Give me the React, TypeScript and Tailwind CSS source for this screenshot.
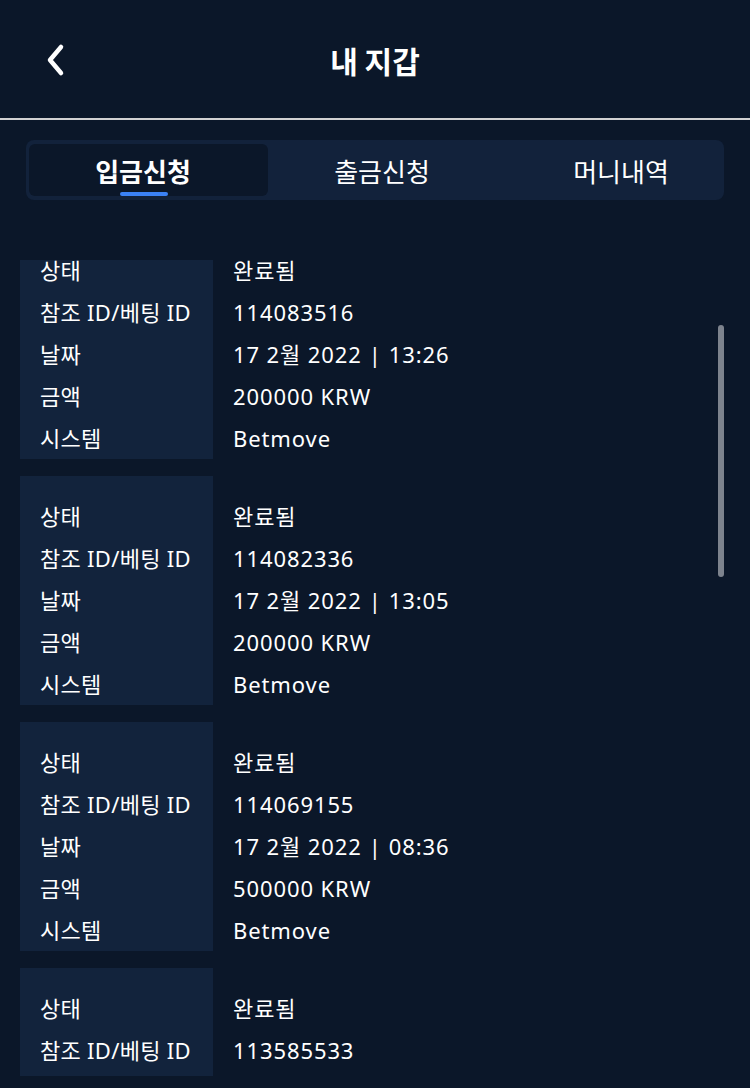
import React from "react";

interface Record {
  status: string;
  refId: string;
  date: string;
  time: string;
  amount: string;
  system: string;
}

const records: Record[] = [
  { status: "완료됨", refId: "114083516", date: "17 2월 2022", time: "13:26", amount: "200000 KRW", system: "Betmove" },
  { status: "완료됨", refId: "114082336", date: "17 2월 2022", time: "13:05", amount: "200000 KRW", system: "Betmove" },
  { status: "완료됨", refId: "114069155", date: "17 2월 2022", time: "08:36", amount: "500000 KRW", system: "Betmove" },
  { status: "완료됨", refId: "113585533", date: "17 2월 2022", time: "08:12", amount: "300000 KRW", system: "Betmove" },
];

const labels = ["상태", "참조 ID/베팅 ID", "날짜", "금액", "시스템"];

const tabs = ["입금신청", "출금신청", "머니내역"];

const RecordCard = ({ record }: { record: Record }) => {
  return (
    <div className="flex">
      <div className="w-[193px] bg-[#12233c] pt-[19px] tracking-[0.3px]">
        {labels.map((l) => (
          <div key={l} className="h-[42px] flex items-center pl-[20px] whitespace-nowrap">
            {l}
          </div>
        ))}
      </div>
      <div className="pt-[19px] pl-[20px] tracking-[0.9px]">
        <div className="h-[42px] flex items-center">{record.status}</div>
        <div className="h-[42px] flex items-center">{record.refId}</div>
        <div className="h-[42px] flex items-center whitespace-nowrap">
          {record.date}
          <span className="mx-[7px]">|</span>
          {record.time}
        </div>
        <div className="h-[42px] flex items-center">{record.amount}</div>
        <div className="h-[42px] flex items-center">{record.system}</div>
      </div>
    </div>
  );
};

export default function App() {
  return (
    <div
      className="w-[750px] h-[1088px] bg-[#0b1729] text-white overflow-hidden relative"
      style={{ fontFamily: '"Noto Sans", "Noto Sans CJK KR", sans-serif' }}
    >
      {/* Header */}
      <header className="h-[118px] flex items-center relative">
        <button className="absolute left-[40px] top-[38px] p-1">
          <svg width="24" height="36" viewBox="0 0 24 36" fill="none">
            <path d="M17 5 L6 18 L17 31" stroke="white" strokeWidth="4.5" strokeLinecap="round" strokeLinejoin="round" />
          </svg>
        </button>
        <h1 className="w-full text-center text-[30px] font-bold pt-[2px]" style={{ fontFamily: '"Noto Sans CJK KR", sans-serif' }}>
          내 지갑
        </h1>
      </header>
      <div className="h-[2px] bg-[#d2d2d2]" />

      {/* Tabs */}
      <div className="mx-[26px] mt-[20px] h-[60px] rounded-lg bg-[#12223b] flex items-center pl-[3px] overflow-hidden">
        {tabs.map((t, i) => (
          <div
            key={t}
            className={
              i === 0
                ? "shrink-0 w-[239px] h-[52px] rounded-md bg-[#0b1729] flex items-center justify-center pr-[11px] text-[26px] font-bold relative"
                : "shrink-0 w-[239px] h-[52px] flex items-center justify-center pr-[11px] text-[26px]"
            }
            style={{ fontFamily: '"Noto Sans CJK KR", sans-serif' }}
          >
            {t}
            {i === 0 && (
              <span className="absolute bottom-0 left-[91px] w-[48px] h-[4px] rounded-full bg-[#3b82f6]" />
            )}
          </div>
        ))}
      </div>

      {/* List */}
      <div className="mt-[60px] mx-[20px] h-[816px] overflow-hidden text-[22px]">
        <div className="-mt-[30px] flex flex-col gap-[17px]">
          {records.map((r) => (
            <RecordCard key={r.refId} record={r} />
          ))}
        </div>
      </div>

      {/* Scrollbar */}
      <div className="absolute left-[718px] top-[325px] w-[6px] h-[252px] rounded-full bg-[#7d838d]" />
    </div>
  );
}
